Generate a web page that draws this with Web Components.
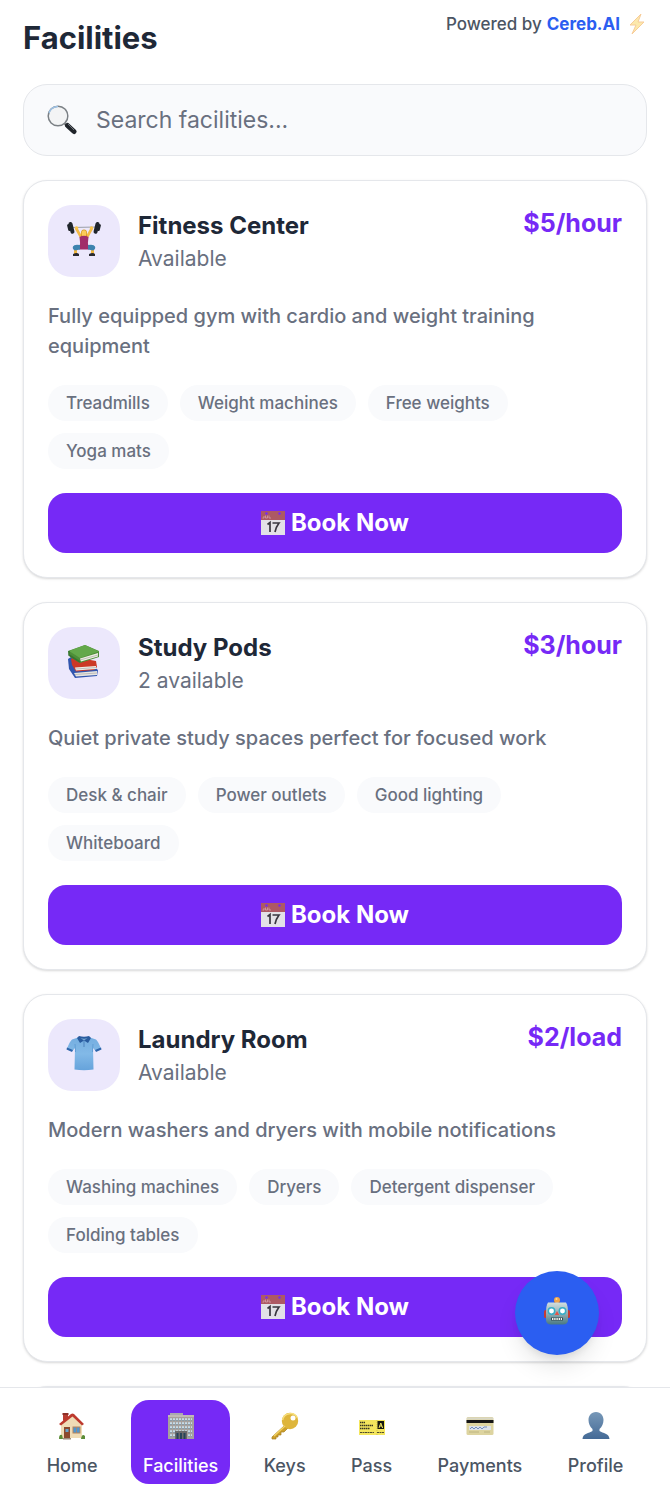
<!DOCTYPE html>
<html lang="en">
<head>
<meta charset="utf-8">
<meta name="viewport" content="width=device-width, initial-scale=1">
<title>Facilities</title>
<style>
  :root {
    --purple: #7629f6;
    --blue: #2b5ef1;
    --ink: #1e2837;
    --muted: #69707f;
    --soft: #f9fafc;
    --line: #e5e7eb;
  }
  body { margin: 0; font-family: Inter, "Liberation Sans", sans-serif; color: var(--ink); background: #fff; }
</style>
</head>
<body>
<facilities-app>
  <app-header slot="header" heading="Facilities"></app-header>
  <search-box label="Search facilities..."></search-box>

  <facility-card>
    <svg slot="icon" viewBox="0 0 36 36" width="36" height="36" aria-hidden="true">
      <path d="M5 6.500 31 6" stroke="#9ba0aa" stroke-width="1"/>
      <path d="M10.500 8 15 16M25.500 8 21 16" stroke="#f3b945" stroke-width="2.600" stroke-linecap="round"/>
      <g fill="#20252b"><rect x="1.500" y="3" width="2.500" height="7" rx="1.200" transform="rotate(-14 3 6)"/><rect x="3.500" y="1" width="4" height="12" rx="2" transform="rotate(-14 5 7)"/><rect x="32" y="3" width="2.500" height="7" rx="1.200" transform="rotate(14 33 6)"/><rect x="28.500" y="1" width="4" height="12" rx="2" transform="rotate(14 31 7)"/></g>
      <circle cx="10.500" cy="7" r="1.800" fill="#f8c44d"/><circle cx="25.500" cy="7" r="1.800" fill="#f8c44d"/>
      <path d="M15 16v-4q0-3.500 3-3.500t3 3.500v4z" fill="#d79a26"/>
      <ellipse cx="18" cy="12.500" rx="2.300" ry="3.200" fill="#fbcb58"/>
      <path d="M13.500 16q4.500-2.500 9 0l-.6 6 .9 6.500h-9.600l.9-6.500z" fill="#a12d69"/>
      <path d="M9.500 28v5M26.500 28v5" stroke="#f0b740" stroke-width="3"/>
      <path d="M14 24q-6-1-7 1.500t2 4l5-1zM22 24q6-1 7 1.500t-2 4l-5-1z" fill="#3d83af"/>
      <path d="M7 33q4-2 6 0v2H7zM23 33q4-2 6 0v2h-6z" fill="#292a31"/>
    </svg>
    <span slot="name">Fitness Center</span>
    <span slot="status">Available</span>
    <span slot="price">$5/hour</span>
    Fully equipped gym with cardio and weight training equipment
    <feature-tag slot="tags">Treadmills</feature-tag>
    <feature-tag slot="tags">Weight machines</feature-tag>
    <feature-tag slot="tags">Free weights</feature-tag>
    <feature-tag slot="tags">Yoga mats</feature-tag>
  </facility-card>

  <facility-card>
    <svg slot="icon" viewBox="0 0 36 36" width="36" height="36" aria-hidden="true">
      <path d="M2 16 5 14 28 24 32 27 31 33 9 35 3 26z" fill="#3155ae"/>
      <path d="M8 30 31 28 31 32 10 33.500z" fill="#e7e6e1"/><path d="M9 31.500 31 30" stroke="#aaa9a7" stroke-width=".7"/>
      <path d="M5 16 8 14 30 18 31 24 28 27 10 28.500 6 22z" fill="#cc3826"/>
      <path d="M9 24.500 30 23 30 26 10 27.500z" fill="#f0eee9"/><path d="M10 26 30 24.500" stroke="#aaa9a7" stroke-width=".7"/>
      <path d="M2 8 19 2 33 8 33 14 14 20 4 14z" fill="#4d8e38"/>
      <path d="M3 8 19 2 33 8.500 14 15z" fill="#63a84a"/>
      <path d="M14 15.500 32 10 32 13.500 15 18.500z" fill="#eeeee4"/><path d="M14 17 32 12" stroke="#a7aaa0" stroke-width=".7"/>
      <path d="M3 8v4l11 7" stroke="#39752f" stroke-width="1.500" fill="none"/>
    </svg>
    <span slot="name">Study Pods</span>
    <span slot="status">2 available</span>
    <span slot="price">$3/hour</span>
    Quiet private study spaces perfect for focused work
    <feature-tag slot="tags">Desk &amp; chair</feature-tag>
    <feature-tag slot="tags">Power outlets</feature-tag>
    <feature-tag slot="tags">Good lighting</feature-tag>
    <feature-tag slot="tags">Whiteboard</feature-tag>
  </facility-card>

  <facility-card>
    <svg slot="icon" viewBox="0 0 36 36" width="36" height="36" aria-hidden="true">
      <defs><linearGradient id="shirt" x2="0" y2="1"><stop stop-color="#75aee0"/><stop offset=".5" stop-color="#82b9e7"/><stop offset="1" stop-color="#66a3db"/></linearGradient></defs>
      <path d="M12 2.500 6 4.500Q4 6 1 13.500l5.500 2.500 2.500-3-.5 21.500q9.500 1.500 19 0L27 13l2.500 3 5.500-2.500Q32 6 30 4.500l-6-2q-6 3-12 0z" fill="url(#shirt)"/>
      <path d="m1 12.500 6 2.500-1 2-5.500-2.500zM35 12.500 29 15l1 2 5.500-2.500z" fill="#2d64aa"/>
      <path d="M13 1q5 1.500 10 0l2 2-3 5-4-2.500L14 8l-3-5z" fill="#295c9f"/>
      <path d="M14.500 3q3.500 1.500 7 0L18 5.500z" fill="#78aad4"/><path d="M18 6v6" stroke="#4f83bd" stroke-width="1"/>
      <path d="m9 9 .5 8M27 9l-.5 8" stroke="#4d8dca" stroke-width=".6"/>
    </svg>
    <span slot="name">Laundry Room</span>
    <span slot="status">Available</span>
    <span slot="price">$2/load</span>
    Modern washers and dryers with mobile notifications
    <feature-tag slot="tags">Washing machines</feature-tag>
    <feature-tag slot="tags">Dryers</feature-tag>
    <feature-tag slot="tags">Detergent dispenser</feature-tag>
    <feature-tag slot="tags">Folding tables</feature-tag>
  </facility-card>
  <card-frame></card-frame>

  <assistant-button slot="overlay"></assistant-button>

  <tab-bar slot="nav">
    <tab-item label="Home">
      <svg viewBox="0 0 28 28" width="28" height="28" aria-hidden="true">
        <path d="M5 9V2h5v4" fill="#b83d32"/><path d="M4.500 1h6v2h-6z" fill="#8e3028"/>
        <path d="M3 13 14 3l10 10v13H3z" fill="#efdcb6"/>
        <path d="M1 12 13 2q1.500-1 3 0l10 10-2 1.500L14.500 4.500 3 13.500z" fill="#bd392d"/>
        <rect x="6" y="15" width="6" height="12" fill="#8b4a2f"/><rect x="7.500" y="17" width="3" height="3" fill="#65a5d0"/>
        <rect x="15" y="15" width="7" height="6" fill="#4f96cf" stroke="#b6845d"/><path d="M18.500 15v6" stroke="#b6845d" stroke-width=".7"/>
        <path d="M5 26h8v1.500H5z" fill="#9c8f80"/><path d="M1 27q0-5 3-4l1 4zM23 27q1-6 4-3v3z" fill="#5c8d38"/>
      </svg>
    </tab-item>
    <tab-item label="Facilities" current>
      <svg viewBox="0 0 28 28" width="28" height="28" aria-hidden="true">
        <path d="M3 1h13v3H3z" fill="#aaa9af"/><path d="M1 3h26v24H1z" fill="#a6a19d"/>
        <path d="M1 3h26v2H1z" fill="#c0bbb5"/>
        <path d="M3 7.500h22M3 11.500h22M3 15.500h22M3 19.500h22M3 23.500h22" stroke="#c6dce9" stroke-width="2.500" stroke-dasharray="2 1"/>
        <path d="M3 8.500h22M3 12.500h22M3 16.500h22M3 20.500h22M3 24.500h22" stroke="#718695" stroke-width=".7" stroke-dasharray="2 1"/>
        <path d="M8 19h12v8H8z" fill="#696a6c"/><path d="M9.500 21h2v6h-2zM13 21h2v6h-2zM16.500 21h2v6h-2z" fill="#28445a"/>
      </svg>
    </tab-item>
    <tab-item label="Keys">
      <svg viewBox="0 0 28 28" width="28" height="28" aria-hidden="true">
        <path d="M13 14 1 25v2h4v-2h2v-2h3v-3h3l4-4z" fill="#cda02b" stroke="#a67f23" stroke-width=".7"/>
        <circle cx="19" cy="9" r="8.200" fill="#deb53b"/><path d="M11.500 8a8 8 0 0 1 15-2" stroke="#f7df7d" stroke-width="1.500" fill="none"/>
        <path d="m14 14-11 10" stroke="#f3d467" stroke-width="1.300"/><circle cx="22" cy="6" r="2.500" fill="#fff"/>
      </svg>
    </tab-item>
    <tab-item label="Pass">
      <svg viewBox="0 0 28 28" width="28" height="28" aria-hidden="true">
        <path d="M1 8h26v15H1z" fill="#f4e65d"/><path d="M19 8v15" stroke="#c2b84b" stroke-width=".7" stroke-dasharray="1 1"/>
        <path d="M2 10.500h5M2 13.500h13M2 16.500h10" stroke="#373522" stroke-width="1.600" stroke-dasharray="1.500 .5"/>
        <path d="M2 20.500h14M19 20.500h7" stroke="#504c2b" stroke-width="1.200" stroke-dasharray="2 .5"/>
        <path d="M19.500 9H26v8h-6.500z" fill="#151711"/><path d="m21 16 1.800-5 1.800 5m-3-2h2.500" stroke="#f4e65d" stroke-width="1" fill="none"/>
      </svg>
    </tab-item>
    <tab-item label="Payments">
      <svg viewBox="0 0 28 28" width="28" height="28" aria-hidden="true">
        <rect x=".5" y="5" width="27" height="18" rx="1.500" fill="#ddd4a0"/><path d="M1 5.500h26v2H1z" fill="#d8d7c6"/><path d="M.5 8h27v3H.5z" fill="#151515"/>
        <path d="M3 14h22v4H3z" fill="#dce2ea"/><path d="m4 17 2-2 2 2 2-2 2 2 2-2 2 2 2-2h3" stroke="#587ab4" stroke-width=".8" fill="none"/>
        <path d="M3 20h10M18 20h6" stroke="#b7ad78" stroke-width=".8"/>
      </svg>
    </tab-item>
    <tab-item label="Profile">
      <svg viewBox="0 0 28 28" width="28" height="28" aria-hidden="true">
        <defs><linearGradient id="bust" x2="0" y2="1"><stop stop-color="#7798b8"/><stop offset="1" stop-color="#446a96"/></linearGradient></defs>
        <path d="M14 0c-5 0-7.500 4-7.500 8 0 3.500 1.500 7 4 9v2C7 21.500 1 21 .5 27h27c-.5-6-6.500-5.500-10-8v-2c2.500-2 4-5.500 4-9 0-4-2.500-8-7.500-8z" fill="url(#bust)"/>
      </svg>
    </tab-item>
  </tab-bar>
</facilities-app>

<script>
const define = (name, markup, setup) => {
  const template = document.createElement('template');
  template.innerHTML = markup;
  customElements.define(name, class extends HTMLElement {
    constructor() {
      super();
      this.attachShadow({ mode: 'open' }).append(template.content.cloneNode(true));
    }
    connectedCallback() {
      if (setup) setup(this, this.shadowRoot);
    }
  });
};

define('facilities-app', `
<style>
  :host { display: flex; flex-direction: column; height: 100vh; position: relative; }
  .scroll { flex: 1; min-height: 0; overflow-y: auto; scrollbar-width: none; }
  main { display: flex; flex-direction: column; gap: 24px; padding: 0 23px; }
</style>
<div class="scroll"><slot name="header"></slot><main><slot></slot></main></div>
<slot name="nav"></slot>
<slot name="overlay"></slot>`);

define('app-header', `
<style>
  :host { display: block; }
  header { display: flex; justify-content: space-between; align-items: flex-start; padding: 12px 24px 24px 23px; }
  h1 { margin: 4px 0 0; font-size: 31px; line-height: 44px; font-weight: 700; }
  p { margin: 0; display: flex; align-items: center; font-size: 17px; line-height: 24px; font-weight: 450; color: #4b5563; }
  a { color: var(--blue); font-weight: 700; text-decoration: none; margin: 0 8px 0 5px; }
  svg { opacity: .5; }
</style>
<header>
  <h1></h1>
  <p>Powered by <a href="#">Cereb.AI</a>
    <svg viewBox="0 0 18 22" width="18" height="22" aria-hidden="true"><path d="M13 1 2 12h6L4 21 16 9H10z" fill="#fbd45c" stroke="#f09a36" stroke-width="1" stroke-linejoin="round"/></svg>
  </p>
</header>`, (host, root) => {
  root.querySelector('h1').textContent = host.getAttribute('heading');
});

define('search-box', `
<style>
  :host { display: block; }
  label { display: flex; align-items: center; gap: 19px; box-sizing: border-box; height: 72px; padding: 0 23px; border: 1px solid var(--line); border-radius: 24px; background: var(--soft); }
  svg { flex: none; }
  input { flex: 1; min-width: 0; padding: 0; border: 0; outline: 0; background: none; font: inherit; font-size: 23px; line-height: 36px; color: var(--ink); }
  input::placeholder { color: var(--muted); opacity: 1; }
</style>
<label>
  <svg viewBox="0 0 30 30" width="30" height="30" aria-hidden="true">
    <path d="m17 18 4 4" stroke="#777" stroke-width="2"/>
    <path d="m20.500 20.500 6.500 6" stroke="#20242a" stroke-width="5" stroke-linecap="round"/>
    <path d="m21 19 6 6" stroke="#71767d" stroke-width="1"/>
    <circle cx="11" cy="11" r="9.800" fill="#f3f4f5" stroke="#7b8085" stroke-width="1.500"/>
    <path d="M2 8a9.500 9.500 0 0 1 9-6.500" stroke="#9fc3e6" stroke-width="1.300" fill="none"/>
  </svg>
  <input type="search">
</label>`, (host, root) => {
  const input = root.querySelector('input');
  input.placeholder = host.getAttribute('label');
  input.setAttribute('aria-label', host.getAttribute('label'));
});

define('card-frame', `
<style>
  :host { display: block; padding: 24px; border: 1px solid var(--line); border-radius: 24px; background: #fff; box-shadow: 0 1px 3px rgba(0,0,0,.1), 0 1px 2px rgba(0,0,0,.06); }
</style>
<slot></slot>`);

define('facility-card', `
<style>
  :host { display: block; }
  .top { display: flex; gap: 18px; align-items: flex-start; }
  .icon { flex: none; box-sizing: border-box; width: 72px; height: 72px; padding-bottom: 4px; display: grid; place-items: center; border-radius: 24px; background: #ece8fc; }
  .title { flex: 1; min-width: 0; padding: 3px 0; }
  h2 { margin: 0; font-size: 24px; line-height: 36px; font-weight: 700; }
  .status { font-size: 21px; line-height: 30px; color: var(--muted); }
  .price { font-size: 25px; line-height: 36px; font-weight: 700; color: var(--purple); }
  .about { margin: 24px 0; font-size: 20px; line-height: 30px; font-weight: 450; color: var(--muted); }
  .tags { display: flex; flex-wrap: wrap; gap: 12px; margin-bottom: 24px; }
  button { display: flex; align-items: center; justify-content: center; gap: 6px; width: 100%; height: 60px; padding: 0; border: 0; border-radius: 18px; background: var(--purple); color: #fff; font: inherit; font-size: 24px; line-height: 36px; font-weight: 700; }
</style>
<card-frame>
  <div class="top">
    <div class="icon"><slot name="icon"></slot></div>
    <div class="title"><h2><slot name="name"></slot></h2><div class="status"><slot name="status"></slot></div></div>
    <div class="price"><slot name="price"></slot></div>
  </div>
  <div class="about"><slot></slot></div>
  <div class="tags"><slot name="tags"></slot></div>
  <button type="button">
    <svg viewBox="0 0 24 24" width="24" height="24" aria-hidden="true">
      <path d="M0 0h24v24H0z" fill="#e3e1e7"/><path d="M0 0h24v9H0z" fill="#ad5964"/>
      <circle cx="5.500" cy="2.500" r="1.200" fill="#7629f6"/><circle cx="18.500" cy="2.500" r="1.200" fill="#7629f6"/>
      <path d="M3 5v2H1.500M4.500 4.500v2.500h2V4.500M8 4.500v2.500h2" stroke="#d5a0aa" stroke-width=".8" fill="none"/>
      <path d="m6.500 13.500 2.500-2v9.500M11.500 12h6.500q-3 4-4 9" stroke="#39363f" stroke-width="1.700" fill="none"/>
    </svg>
    <span>Book Now</span>
  </button>
</card-frame>`);

define('feature-tag', `
<style>
  :host { display: block; padding: 6px 18px; border-radius: 18px; background: var(--soft); color: var(--muted); font-size: 17px; line-height: 24px; font-weight: 500; }
</style>
<slot></slot>`);

define('assistant-button', `
<style>
  :host { display: block; position: absolute; right: 71px; bottom: 135px; }
  button { display: grid; place-items: center; width: 84px; height: 84px; padding: 0 0 4px; border: 0; border-radius: 50%; background: var(--blue); box-shadow: 0 15px 24px -4px rgba(0,0,0,.1), 0 6px 9px -4px rgba(0,0,0,.1); }
</style>
<button type="button" aria-label="Assistant">
  <svg viewBox="0 0 28 30" width="28" height="30" aria-hidden="true">
    <defs><linearGradient id="head" x2="0" y2="1"><stop stop-color="#d2dfe0"/><stop offset=".5" stop-color="#91aeb4"/><stop offset="1" stop-color="#497983"/></linearGradient></defs>
    <rect x="1" y="14" width="3" height="8" rx="1.500" fill="#c53b34"/><rect x="24" y="14" width="3" height="8" rx="1.500" fill="#c53b34"/>
    <rect x="11" y="4" width="6" height="4" rx="1.500" fill="#7b4c54"/><circle cx="14" cy="4" r="3" fill="#f0a44c"/><circle cx="13.500" cy="3" r="1" fill="#ffd88f"/>
    <path d="M5 6.500h18q2 3 2 10v7q0 5-5 5H8q-5 0-5-5v-7q0-7 2-10z" fill="url(#head)"/>
    <circle cx="8.500" cy="15" r="3.200" fill="#fff" stroke="#37adc7" stroke-width="1.500"/><circle cx="19.500" cy="15" r="3.200" fill="#fff" stroke="#37adc7" stroke-width="1.500"/>
    <path d="m14 15 2.200 4h-4.400z" fill="#e55347"/><path d="M8 21.500h12v3H8z" fill="#324b52"/><path d="M9 23h10" stroke="#f4f6f2" stroke-width="2" stroke-dasharray="1.400 .8"/>
  </svg>
</button>`);

define('tab-bar', `
<style>
  :host { display: block; position: relative; background: #fff; border-top: 1px solid var(--line); }
  nav { display: flex; justify-content: space-around; padding: 12px 24px 6px; }
</style>
<nav aria-label="Main"><slot></slot></nav>`);

define('tab-item', `
<style>
  :host { display: block; }
  a { display: flex; flex-direction: column; align-items: center; gap: 14px; padding: 12px 12px 6px; border-radius: 18px; color: #4b5563; text-decoration: none; font-size: 18px; line-height: 24px; font-weight: 450; }
  :host([current]) a { background: var(--purple); color: #fff; }
</style>
<a href="#"><slot></slot><span></span></a>`, (host, root) => {
  root.querySelector('span').textContent = host.getAttribute('label');
  if (host.hasAttribute('current')) root.querySelector('a').setAttribute('aria-current', 'page');
});
</script>
</body>
</html>
